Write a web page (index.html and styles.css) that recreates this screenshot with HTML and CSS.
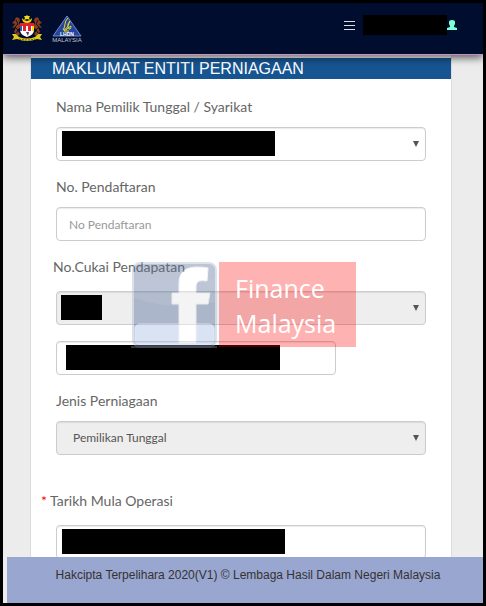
FILE: index.html
```html
<!DOCTYPE html>
<html lang="ms">
  <head>
    <meta charset="UTF-8" />
    <meta name="viewport" content="width=device-width, initial-scale=1.0" />
    <title>Maklumat Entiti Perniagaan</title>
    <link rel="stylesheet" href="styles.css">
  </head>
  <body>
    <header class="navbar">
      <div class="logos">
        <svg class="crest" viewBox="0 0 32 28" aria-hidden="true">
          <path d="M11 3q0 5 5 5t5-5q-2 3-5 3t-5-3z" fill="#f5d90a" />
          <path d="M16 0l1 1 2 0-1 2 1 2-3-1-3 1 1-2-1-2 2 0z" fill="#f5d90a" />
          <path d="M8 3Q4 1 4 5L1 8l3 1-3 4 4-1-2 5 4 4 2-2-3-4 4-3-2-4 1-3z" fill="#8a3d1c" />
          <path d="M24 3q4-2 4 2l3 3-3 1 3 4-4-1 2 5-4 4-2-2 3-4-4-3 2-4-1-3z" fill="#8a3d1c" />
          <path d="M5 5l2 4-3 3 3 3-2 3M27 5l-2 4 3 3-3 3 2 3" fill="none" stroke="#14101f" />
          <path d="M9 8h14v7q0 5-7 7q-7-2-7-7z" fill="#fff" />
          <path d="M9 8h14v3H9z" fill="#e3202b" />
          <path d="M12 11h3v5h-3zM17 11h3v5h-3z" fill="#e3202b" />
          <path d="M9 11h2v5H9z" fill="#2860a8" />
          <path d="M21 11h2v5h-2z" fill="#f5d90a" />
          <path d="M15 17h3l-1 4z" fill="#444" />
          <path d="M1 19l4 0 3 3q8 3 16 0l3-3 4 0-2 3 2 3-5-1q-10 4-20 0l-5 1 2-3z" fill="#e0cc18" />
          <path d="M8 24q8 2 16 0" fill="none" stroke="#6d5a10" stroke-dasharray="2 1" />
        </svg>
        <svg class="lhdn" viewBox="0 0 32 28" aria-hidden="true">
          <path d="M16 1L30 21H2z" fill="#2446a0" stroke="#7088c4" />
          <path d="M17 3q-3 3-3 6t-2 6q4-1 5-4t2-5q-3 3-2 6t2 2 1-3l-4 3-3 2h5" fill="none" stroke="#e8d622" />
          <text x="16" y="21" class="logo-name">LHDN</text>
          <text x="16" y="27" class="logo-country">MALAYSIA</text>
        </svg>
      </div>
      <div class="user-menu">
        <button class="menu-btn" type="button" aria-label="Menu">
          <svg viewBox="0 0 12 10" aria-hidden="true">
            <path d="M0 1.500h11M0 5.500h11M0 9.500h11" stroke="#ddd" />
          </svg>
        </button>
        <span class="user-name"></span>
        <a class="user-link" href="#" aria-label="Profil">
          <svg viewBox="0 0 10 10" aria-hidden="true">
            <path d="M2 2q0-2 3-2t3 2v2L7 6v1l3 1v2H0V8l3-1V6L2 4z" fill="#7fffd4" />
          </svg>
        </a>
      </div>
    </header>

    <main class="content">
      <form class="card">
        <h1>MAKLUMAT ENTITI PERNIAGAAN</h1>
        <div class="fields">
          <div class="form-group">
            <label for="owner">Nama Pemilik Tunggal / Syarikat</label>
            <div class="control arrow">
              <select id="owner" name="owner"><option></option></select>
              <span class="mask mask-owner"></span>
            </div>
          </div>

          <div class="form-group">
            <label for="reg_no">No. Pendaftaran</label>
            <div class="control">
              <input type="text" id="reg_no" name="reg_no" placeholder="No Pendaftaran" />
            </div>
          </div>

          <div class="form-group tax-group">
            <label for="tax_type">No.Cukai Pendapatan</label>
            <div class="control arrow">
              <select id="tax_type" name="tax_type" disabled><option></option></select>
              <span class="mask mask-type"></span>
            </div>
            <div class="control tax-no">
              <input type="text" name="tax_no" aria-label="No.Cukai Pendapatan" />
              <span class="mask mask-tax"></span>
            </div>
            <div class="watermark">
              <svg viewBox="0 0 86 86" aria-hidden="true">
                <defs>
                  <linearGradient id="tile" x1="0" y1="0" x2="0" y2="1">
                    <stop offset="0" stop-color="#4c6088" />
                    <stop offset="1" stop-color="#4868a0" />
                  </linearGradient>
                </defs>
                <path d="M0 84h86v2H0z" fill="#888" />
                <rect x="2" y="1" width="83" height="84" rx="7" fill="url(#tile)" stroke="#a8b5cf" stroke-width="2" />
                <path d="M3 8q0-6 6-6h69q6 0 6 6v32Q45 50 3 36z" fill="#8094b8" opacity=".3" />
                <rect x="4" y="62" width="79" height="21" rx="5" fill="#a3bbe2" stroke="#bccbe6" />
                <path d="M77 6q-29-5-29 15v10h-7v11h7v39h17V42h12l2-11H65v-7q0-7 11-5z" fill="#fff" stroke="#dfe4ee" />
              </svg>
              <p>Finance<br />Malaysia</p>
            </div>
          </div>

          <div class="form-group">
            <label for="business_type">Jenis Perniagaan</label>
            <div class="control arrow">
              <select id="business_type" name="business_type" disabled>
                <option>Pemilikan Tunggal</option>
              </select>
            </div>
          </div>

          <div class="form-group date-group">
            <label for="start_date"><span class="required">*</span> Tarikh Mula Operasi</label>
            <div class="control">
              <input type="text" id="start_date" name="start_date" />
              <span class="mask mask-date"></span>
            </div>
          </div>
        </div>
      </form>
    </main>

    <footer>Hakcipta Terpelihara 2020(V1) © Lembaga Hasil Dalam Negeri Malaysia</footer>
  </body>
</html>
```

FILE: styles.css
```css
* {
  margin: 0;
  padding: 0;
  box-sizing: border-box;
}

body {
  height: 100vh;
  display: flex;
  flex-direction: column;
  border: 3px solid #000;
  background: #ececec;
  font-family: Lato, sans-serif;
  font-size: 14px;
  line-height: 20px;
  color: #666;
  overflow: hidden;
}

.navbar {
  flex: none;
  display: flex;
  justify-content: space-between;
  align-items: flex-start;
  height: 52px;
  padding: 12px 26px 0 8px;
  background: #000d2e;
  border-bottom: 1px solid #c48fc9;
  box-shadow: 0 3px 8px rgba(0, 0, 0, 0.6);
  position: relative;
  z-index: 2;
}

.logos {
  display: flex;
  gap: 8px;
}

.logos svg {
  display: block;
  width: 32px;
  height: 28px;
}

.logo-name {
  font: bold 5px "Liberation Sans", sans-serif;
  fill: #fff;
  text-anchor: middle;
}

.logo-country {
  font: 6px "Liberation Sans", sans-serif;
  fill: #c4c8d4;
  text-anchor: middle;
}

.user-menu {
  display: flex;
  align-items: center;
}

.menu-btn {
  width: 12px;
  height: 20px;
  margin-right: 7px;
  border: none;
  background: none;
  cursor: pointer;
}

.menu-btn svg {
  display: block;
  width: 12px;
  height: 10px;
}

.user-name {
  width: 84px;
  height: 20px;
  background: #000;
}

.user-link svg {
  display: block;
  width: 10px;
  height: 10px;
}

.content {
  flex: 1;
  min-height: 0;
  padding: 0 31px 0 27px;
  overflow: hidden;
}

.card {
  min-height: 100%;
  padding-top: 3px;
  background: #fff;
  border: solid #ddd;
  border-width: 0 1px;
}

h1 {
  height: 21px;
  padding-left: 21px;
  background: #165591;
  color: #fff;
  font: 16px/21px "Liberation Sans", Arial, sans-serif;
}

.fields {
  padding: 18px 25px 0;
}

.form-group {
  margin-bottom: 16px;
  position: relative;
}

label {
  display: block;
  margin-bottom: 10px;
}

.control {
  position: relative;
}

input,
select {
  display: block;
  width: 100%;
  height: 34px;
  padding: 6px 12px;
  border: 1px solid #ccc;
  border-radius: 4px;
  background: #fff;
  box-shadow: inset 0 1px 1px rgba(0, 0, 0, 0.08);
  color: #555;
  font: 12px/20px Lato, sans-serif;
  appearance: none;
}

select {
  padding: 6px 16px;
}

select:disabled {
  background: #eee;
  opacity: 1;
}

input::placeholder {
  color: #999;
}

.arrow::after {
  content: "";
  position: absolute;
  top: 14px;
  right: 7px;
  border: solid transparent;
  border-width: 6px 3px 0;
  border-top-color: #555;
  pointer-events: none;
}

.tax-group label {
  margin: 0 0 14px -3px;
}

.tax-no {
  max-width: 280px;
  margin-top: 16px;
}

/* blacked-out values */
.mask {
  position: absolute;
  top: 4px;
  left: 6px;
  height: 25px;
  background: #000;
}

.mask-owner {
  width: 213px;
}

.mask-type {
  left: 5px;
  width: 41px;
}

.mask-tax {
  left: 10px;
  width: 214px;
}

.mask-date {
  width: 223px;
}

.date-group {
  margin-top: 36px;
}

.date-group label {
  margin: 0 0 14px -15px;
}

.required {
  color: #f00;
}

.watermark {
  display: flex;
  gap: 2px;
  position: absolute;
  top: 5px;
  left: 75px;
  z-index: 1;
  pointer-events: none;
}

.watermark svg {
  width: 86px;
  height: 86px;
  opacity: 0.4;
}

.watermark p {
  width: 137px;
  height: 85px;
  padding: 9px 16px;
  background: rgba(255, 0, 0, 0.3);
  color: #fff;
  font: 25px/35px "Open Sans", sans-serif;
}

footer {
  flex: none;
  height: 46px;
  margin-left: 4px;
  padding: 8px 24px 0 30px;
  background: #99a6cf;
  color: #333;
  font: 12px/20px "Liberation Sans", Arial, sans-serif;
  text-align: center;
  white-space: nowrap;
}
```
